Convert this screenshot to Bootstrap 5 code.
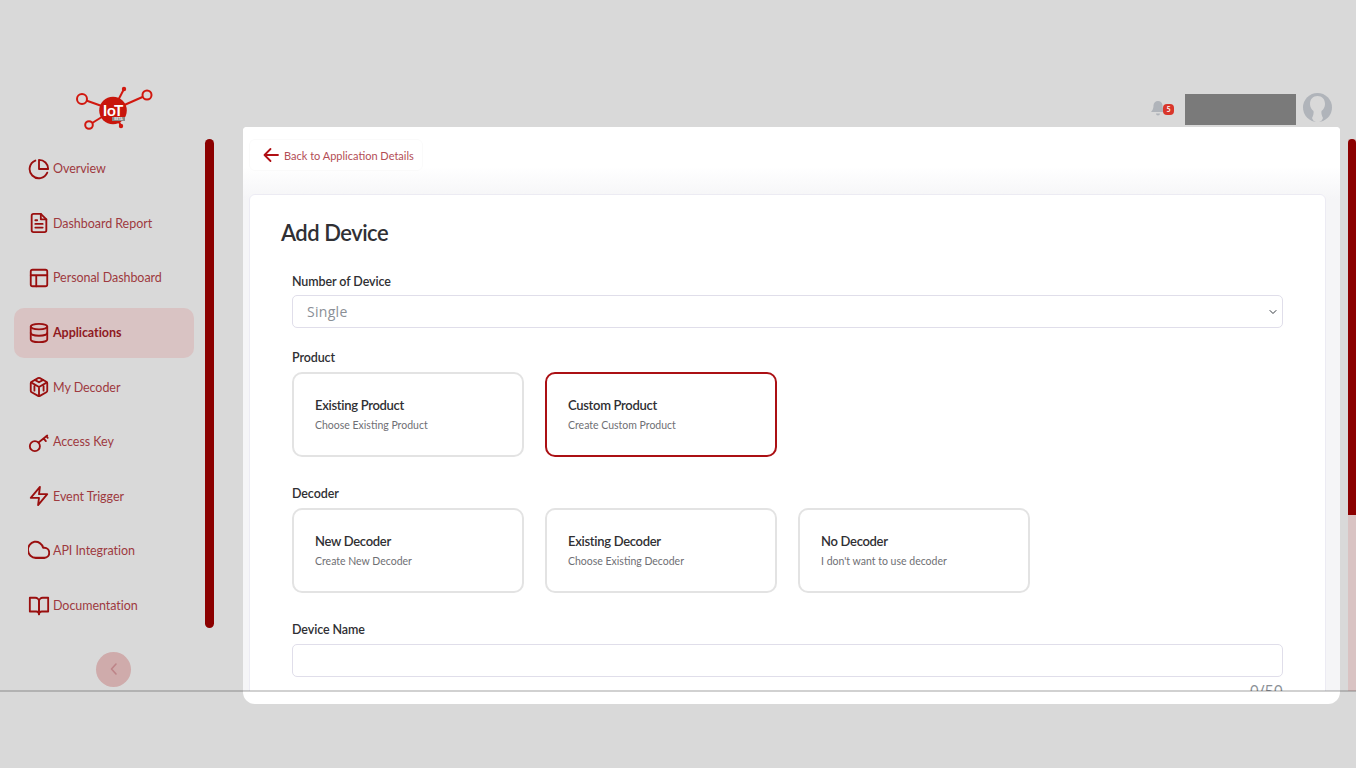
<!DOCTYPE html>
<html lang="en">
<head>
    <meta charset="UTF-8">
    <meta name="viewport" content="width=device-width, initial-scale=1.0">
    <title>Add Device</title>
    <link href="https://cdn.jsdelivr.net/npm/bootstrap@5.3.0/dist/css/bootstrap.min.css" rel="stylesheet">
    <style>
        html, body { height: 768px; overflow: hidden; }
        body { background: #d9d9d9; font-family: "Lato", "Liberation Sans", sans-serif; color: #2f2f33; }
        .shell { height: 768px; position: relative; }

        /* sidebar */
        .side-col { width: 205px; flex: none; }
        .logo-box { height: 143.8px; padding-top: 85px; padding-left: 75px; }
        .side-nav { gap: 4.6px; padding-left: 14px; width: 194px; }
        .side-link { height: 50px; padding-left: 14px; gap: 3px; border-radius: 10px; color: #9e3a3f; font: 400 12.5px "Lato", sans-serif; letter-spacing: -.05px; text-decoration: none; }
        .side-link svg { width: 22px; height: 22px; flex: none; fill: none; stroke: #9a0f0f; stroke-width: 2; stroke-linecap: round; stroke-linejoin: round; }
        .side-link.current { background: #d9c3c3; color: #8f1a1f; font-weight: 700; }
        .side-thumb { width: 9px; height: 489px; margin-top: 139px; background: #8b0000; border-radius: 5px; flex: none; }
        .collapse-btn { width: 35px; height: 35px; margin: 21px 0 0 96px; border-radius: 50%; background: #cfabab; }
        .collapse-btn svg { width: 12px; height: 14px; fill: none; stroke: #bd8488; stroke-width: 1.6; stroke-linecap: round; stroke-linejoin: round; }

        /* top bar */
        .main-col { margin-left: 29px; width: 1097px; flex: none; }
        .top-bar { height: 127px; padding-right: 8px; padding-bottom: 2px; }
        .bell-box { width: 24px; height: 20px; position: relative; margin-right: 11px; margin-bottom: 6px; }
        .bell-box svg { display: block; margin: 1px 0 0 0; }
        .bell-count { position: absolute; left: 13px; top: 5px; width: 11px; height: 11px; border-radius: 4px; background: #d9362b; color: #fff; font: 700 7px/11px "Lato", sans-serif; text-align: center; }
        .user-mask { width: 111px; height: 31px; background: #7a7a7a; }
        .user-pic { width: 29px; height: 29px; margin-left: 7px; margin-bottom: 3px; }

        /* panel */
        .panel-box { height: 577px; background: #fff; border-radius: 4px 4px 12px 12px; overflow: hidden; }
        .panel-view { height: 564px; overflow: hidden; background: linear-gradient(#fff 0, #fff 40px, #f5f5f7 72px); padding: 12px 14px 0 6px; }
        .back-link { width: 174px; height: 32px; padding-left: 13px; gap: 5px; border: 1px solid #fafafa; border-radius: 6px; background: #fff; color: #b34d55; font: 400 11px "Lato", sans-serif; text-decoration: none; margin-bottom: 23px; }
        .back-link svg { width: 16px; height: 16px; flex: none; fill: none; stroke: #b00f14; stroke-width: 1.8; stroke-linecap: round; stroke-linejoin: round; }
        .form-card { background: #fff; border: 1px solid #ecebf3; border-radius: 6px; padding: 22px 42px 30px 31px; height: 520px; }
        .form-title { font: 600 22px/32px "Lato", sans-serif; letter-spacing: -.5px; color: #303034; margin: 0 0 25px; }
        .form-body { padding-left: 11px; }
        .field-name { display: block; font: 600 12.5px/16px "Lato", sans-serif; color: #2f2f33; letter-spacing: -.1px; margin: 0 0 5px; }
        .field-name.over-picks { margin-top: 22px; margin-bottom: 6px; }
        .field-name.after-picks { margin-top: 29px; margin-bottom: 6px; }
        .field-ctl.form-select, .field-ctl.form-control { height: 33px; border: 1px solid #e0deea; border-radius: 5px; font: 400 14px "Open Sans", sans-serif; color: #8a8f96; padding: 0 14px; letter-spacing: .3px; box-shadow: none; }
        .field-ctl.form-select { background-size: 10px 8px; background-position: right 4px center; }
        .pick-row { gap: 21px; }
        .pick-item { width: 232px; height: 85px; padding: 0 21px; border: 2px solid #e3e3e3; border-radius: 10px; background: #fff; }
        .pick-item.picked { border-color: #ab1014; }
        .pick-head { font: 600 13px/17px "Lato", sans-serif; color: #2f2f33; letter-spacing: -.3px; margin-bottom: 4px; }
        .pick-sub { font: 400 10.5px/15px "Lato", sans-serif; color: #6f6f74; }
        .count-text { font: 400 16px/19px "Open Sans", sans-serif; color: #8a8f96; margin-top: 5px; }

        /* page scrollbar */
        .page-track { width: 8px; height: 552px; margin-top: 139px; margin-left: 8px; background: #d9c3c3; flex: none; }
        .page-thumb { height: 376px; background: #8b0000; border-radius: 4px 4px 0 0; }
        .fold-line { position: absolute; left: 0; right: 0; top: 690px; height: 2px; background: rgba(0, 0, 0, .18); }
    </style>
</head>
<body>
<div class="shell d-flex">
    <!-- sidebar -->
    <aside class="side-col d-flex flex-column">
        <div class="logo-box">
            <svg width="78" height="46" viewBox="0 0 78 46">
                <g fill="none" stroke="#d1180f" stroke-width="2">
                    <line x1="38" y1="25" x2="7" y2="14"/>
                    <line x1="38" y1="25" x2="72" y2="10"/>
                    <line x1="38" y1="25" x2="14" y2="40"/>
                    <line x1="38" y1="25" x2="49" y2="4"/>
                    <line x1="38" y1="25" x2="46" y2="41"/>
                    <circle cx="7" cy="14" r="5" fill="#d9d9d9"/>
                    <circle cx="72" cy="10" r="4.500" fill="#d9d9d9"/>
                    <circle cx="14" cy="40" r="3.800" fill="#d9d9d9"/>
                </g>
                <circle cx="49" cy="4" r="2.200" fill="#d1180f"/>
                <circle cx="46" cy="41" r="2.200" fill="#d1180f"/>
                <circle cx="38" cy="25.500" r="13.800" fill="#c8160c"/>
                <text x="38" y="30.500" text-anchor="middle" font-family="Lato" font-weight="700" font-size="15.500" fill="#fff">IoT</text>
                <rect x="37" y="32" width="13" height="4" fill="#888"/>
                <text x="43.500" y="35.300" text-anchor="middle" font-family="Lato" font-weight="700" font-size="3.400" fill="#eee">BETA</text>
            </svg>
        </div>
        <nav class="side-nav d-flex flex-column">
            <a class="side-link d-flex align-items-center" href="#">
                <svg viewBox="0 0 24 24"><path d="M21 15.900A10 10 0 1 1 8 2.800"/><path d="M22 12A10 10 0 0 0 12 2v10z"/></svg>
                Overview
            </a>
            <a class="side-link d-flex align-items-center" href="#">
                <svg viewBox="0 0 24 24"><path d="M14 2H6a2 2 0 0 0-2 2v16a2 2 0 0 0 2 2h12a2 2 0 0 0 2-2V8z"/><path d="M14 2v6h6M16 13H8M16 17H8M10 9H8"/></svg>
                Dashboard Report
            </a>
            <a class="side-link d-flex align-items-center" href="#">
                <svg viewBox="0 0 24 24"><rect x="3" y="3" width="18" height="18" rx="2"/><path d="M3 9h18M9 21V9"/></svg>
                Personal Dashboard
            </a>
            <a class="side-link current d-flex align-items-center" href="#">
                <svg viewBox="0 0 24 24"><ellipse cx="12" cy="5" rx="9" ry="3"/><path d="M21 12c0 1.700-4 3-9 3s-9-1.300-9-3"/><path d="M3 5v14c0 1.700 4 3 9 3s9-1.300 9-3V5"/></svg>
                Applications
            </a>
            <a class="side-link d-flex align-items-center" href="#">
                <svg viewBox="0 0 24 24"><path d="M21 16V8a2 2 0 0 0-1-1.700l-7-4a2 2 0 0 0-2 0l-7 4A2 2 0 0 0 3 8v8a2 2 0 0 0 1 1.700l7 4a2 2 0 0 0 2 0l7-4a2 2 0 0 0 1-1.700z"/><path d="M7.500 4.200l4.500 2.600 4.500-2.600M3.300 7L12 12l8.700-5M12 22V12M7 11v5M17 11v5"/></svg>
                My Decoder
            </a>
            <a class="side-link d-flex align-items-center" href="#">
                <svg viewBox="0 0 24 24"><circle cx="7.500" cy="16.500" r="5.500"/><path d="M11.500 12.500L21 5M17 8l2.500 3M20 5.500l1.500 2"/></svg>
                Access Key
            </a>
            <a class="side-link d-flex align-items-center" href="#">
                <svg viewBox="0 0 24 24"><polygon points="13 2 3 14 12 14 11 22 21 10 12 10 13 2"/></svg>
                Event Trigger
            </a>
            <a class="side-link d-flex align-items-center" href="#">
                <svg viewBox="0 0 24 24"><path d="M18 10h-1.300A8 8 0 1 0 9 20h9a5 5 0 0 0 0-10z" transform="translate(-1 -2.500) scale(1.050 1.100)"/></svg>
                API Integration
            </a>
            <a class="side-link d-flex align-items-center" href="#">
                <svg viewBox="0 0 24 24"><path d="M2 3h6a4 4 0 0 1 4 4v14a3 3 0 0 0-3-3H2z"/><path d="M22 3h-6a4 4 0 0 0-4 4v14a3 3 0 0 1 3-3h7z"/></svg>
                Documentation
            </a>
        </nav>
        <div class="collapse-btn d-flex align-items-center justify-content-center">
            <svg viewBox="0 0 12 14"><path d="M8 2L3.500 7 8 12"/></svg>
        </div>
    </aside>
    <div class="side-thumb"></div>

    <!-- main -->
    <div class="main-col d-flex flex-column">
        <div class="top-bar d-flex justify-content-end align-items-end">
            <div class="bell-box">
                <svg width="16" height="17" viewBox="0 0 15 17"><path d="M7.500 1a4.500 4.500 0 0 1 4.500 4.500c0 4 1.700 5.500 2.500 6.500H.5c.8-1 2.500-2.500 2.500-6.500A4.500 4.500 0 0 1 7.500 1zM5.500 13.500h4a2 2 0 0 1-4 0z" fill="#b0b4ba"/></svg>
                <span class="bell-count">5</span>
            </div>
            <div class="user-mask"></div>
            <svg class="user-pic" viewBox="0 0 29 29">
                <circle cx="14.500" cy="14.500" r="14.500" fill="#b0b4ba"/>
                <path d="M14.500 3c-4.500 0-7.500 3-7.500 8 0 3 1.500 5.500 3.500 7 .5 2.500-.5 5-1.500 7 1 2 1.500 4 5.500 4s4.500-2 5.500-4c-1-2-2-4.500-1.500-7 2-1.500 3.500-4 3.500-7 0-5-3-8-7.500-8z" fill="#d9d9d9"/>
            </svg>
        </div>
        <div class="panel-box">
            <div class="panel-view">
                <a class="back-link d-flex align-items-center" href="#">
                    <svg viewBox="0 0 16 16"><path d="M15 8H1.500M7.500 2L1.500 8l6 6"/></svg>
                    Back to Application Details
                </a>
                <div class="form-card">
                    <h1 class="form-title">Add Device</h1>
                    <div class="form-body">
                        <label class="field-name">Number of Device</label>
                        <select class="form-select field-ctl">
                            <option>Single</option>
                        </select>
                        <label class="field-name over-picks">Product</label>
                        <div class="pick-row d-flex">
                            <div class="pick-item d-flex flex-column justify-content-center">
                                <div class="pick-head">Existing Product</div>
                                <div class="pick-sub">Choose Existing Product</div>
                            </div>
                            <div class="pick-item picked d-flex flex-column justify-content-center">
                                <div class="pick-head">Custom Product</div>
                                <div class="pick-sub">Create Custom Product</div>
                            </div>
                        </div>
                        <label class="field-name after-picks">Decoder</label>
                        <div class="pick-row d-flex">
                            <div class="pick-item d-flex flex-column justify-content-center">
                                <div class="pick-head">New Decoder</div>
                                <div class="pick-sub">Create New Decoder</div>
                            </div>
                            <div class="pick-item d-flex flex-column justify-content-center">
                                <div class="pick-head">Existing Decoder</div>
                                <div class="pick-sub">Choose Existing Decoder</div>
                            </div>
                            <div class="pick-item d-flex flex-column justify-content-center">
                                <div class="pick-head">No Decoder</div>
                                <div class="pick-sub">I don't want to use decoder</div>
                            </div>
                        </div>
                        <label class="field-name after-picks">Device Name</label>
                        <input type="text" class="form-control field-ctl">
                        <div class="count-text text-end">0/50</div>
                    </div>
                </div>
            </div>
        </div>
    </div>

    <div class="page-track"><div class="page-thumb"></div></div>
    <div class="fold-line"></div>
</div>
<script src="https://cdn.jsdelivr.net/npm/bootstrap@5.3.0/dist/js/bootstrap.bundle.min.js"></script>
</body>
</html>
